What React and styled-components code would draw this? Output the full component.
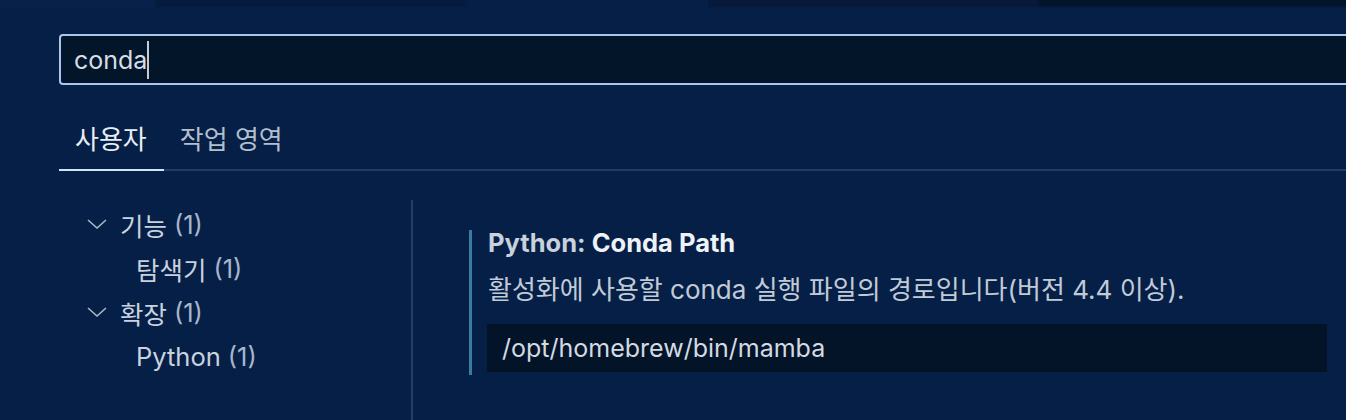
import React from "react";
import styled, { createGlobalStyle } from "styled-components";

const Global = createGlobalStyle`
  html, body { margin: 0; padding: 0; background: #061f47; overflow: hidden; }
  * { box-sizing: border-box; }
`;

const FONT = `"Inter", "Noto Sans CJK KR", "Noto Sans", sans-serif`;

const Page = styled.div`
  width: 1346px;
  height: 420px;
  overflow: hidden;
  background: #061f47;
  font-family: ${FONT};
  display: flex;
  flex-direction: column;
`;

const TopStrip = styled.div`
  display: flex;
  height: 7px;
  align-items: flex-start;
`;

const StripSeg = styled.div`
  width: ${(p) => p.$w}px;
  flex: ${(p) => (p.$grow ? "1 1 auto" : "0 0 auto")};
  height: ${(p) => p.$h || 7}px;
  background: ${(p) => p.$bg};
  box-shadow: ${(p) => (p.$shadow ? "0 1px 3px rgba(0,0,0,0.5)" : "none")};
`;

const Header = styled.div`
  padding: 27px 0 0 59px;
`;

const SearchBox = styled.div`
  width: 1320px;
  height: 51px;
  border: 2px solid #a9c6ec;
  border-radius: 4px;
  background: #031529;
  display: flex;
  align-items: center;
  padding-left: 13px;
  font-size: 25px;
  color: #d6dde6;
`;

const Caret = styled.span`
  display: inline-block;
  width: 2px;
  height: 38px;
  background: #c4ccd6;
`;

const TabBar = styled.div`
  margin-top: 20px;
  display: flex;
  box-shadow: inset 0 -2px 0 #223d62;
`;

const Tab = styled.div`
  height: 66px;
  padding: 0 17px 0 16px;
  display: flex;
  align-items: center;
  font-size: 26px;
  color: ${(p) => (p.$active ? "#e8edf3" : "#b3bfcd")};
  border-bottom: 2px solid ${(p) => (p.$active ? "#d3e3f7" : "transparent")};
`;

const Body = styled.div`
  flex: 1;
  display: flex;
  margin-top: 29px;
  padding-left: 59px;
`;

const Toc = styled.div`
  width: 354px;
  border-right: 2px solid #243f63;
  padding-top: 2px;
`;

const TocRow = styled.div`
  height: 44px;
  display: flex;
  align-items: center;
  padding-left: ${(p) => (p.$child ? 77 : 28)}px;
  font-size: 25.5px;
  color: #c9d3df;
`;

const Chevron = styled.svg`
  width: 20px;
  height: 10px;
  margin-right: 13px;
  flex: none;
`;

const Count = styled.span`
  color: #a7b6c9;
  margin-left: 7px;
`;

const Settings = styled.div`
  flex: 1;
  padding: 30px 19px 0 56px;
`;

const Item = styled.div`
  border-left: 3px solid #3b7aa3;
  padding-left: 16px;
  height: 145px;
  display: flex;
  flex-direction: column;
`;

const Title = styled.div`
  font-size: 25.5px;
  font-weight: 700;
  line-height: 26px;
  color: #c8d1dc;
`;

const TitleKey = styled.span`
  color: #eef2f7;
`;

const Desc = styled.div`
  margin-top: 21px;
  font-size: 26px;
  line-height: 26px;
  color: #c1cbd7;
  white-space: nowrap;
`;

const ValueBox = styled.div`
  margin-top: 21px;
  margin-left: -1px;
  height: 48px;
  width: 840px;
  background: #031428;
  display: flex;
  align-items: center;
  padding-left: 15px;
  font-size: 25px;
  color: #d3dae3;
`;

const tocItems = [
  { label: "기능", count: 1, parent: true },
  { label: "탐색기", count: 1 },
  { label: "확장", count: 1, parent: true },
  { label: "Python", count: 1 },
];

export default function App() {
  return (
    <>
      <Global />
      <Page>
        <TopStrip>
          <StripSeg $w={155} $bg="#07214a" />
          <StripSeg $w={313} $bg="#071b3e" />
          <StripSeg $w={240} $bg="#061f47" />
          <StripSeg $w={331} $bg="#081a3b" />
          <StripSeg $grow $h={5} $bg="#02142a" $shadow />
        </TopStrip>
        <Header>
          <SearchBox>
            conda
            <Caret />
          </SearchBox>
          <TabBar>
            <Tab $active>사용자</Tab>
            <Tab>작업 영역</Tab>
          </TabBar>
        </Header>
        <Body>
          <Toc>
            {tocItems.map((it) => (
              <TocRow key={it.label} $child={!it.parent}>
                {it.parent && (
                  <Chevron viewBox="0 0 20 10">
                    <polyline
                      points="1,1 10,9 19,1"
                      fill="none"
                      stroke="#a9b6c6"
                      strokeWidth="1.6"
                    />
                  </Chevron>
                )}
                {it.label}
                <Count>({it.count})</Count>
              </TocRow>
            ))}
          </Toc>
          <Settings>
            <Item>
              <Title>
                Python: <TitleKey>Conda Path</TitleKey>
              </Title>
              <Desc>활성화에 사용할 conda 실행 파일의 경로입니다(버전 4.4 이상).</Desc>
              <ValueBox>/opt/homebrew/bin/mamba</ValueBox>
            </Item>
          </Settings>
        </Body>
      </Page>
    </>
  );
}
